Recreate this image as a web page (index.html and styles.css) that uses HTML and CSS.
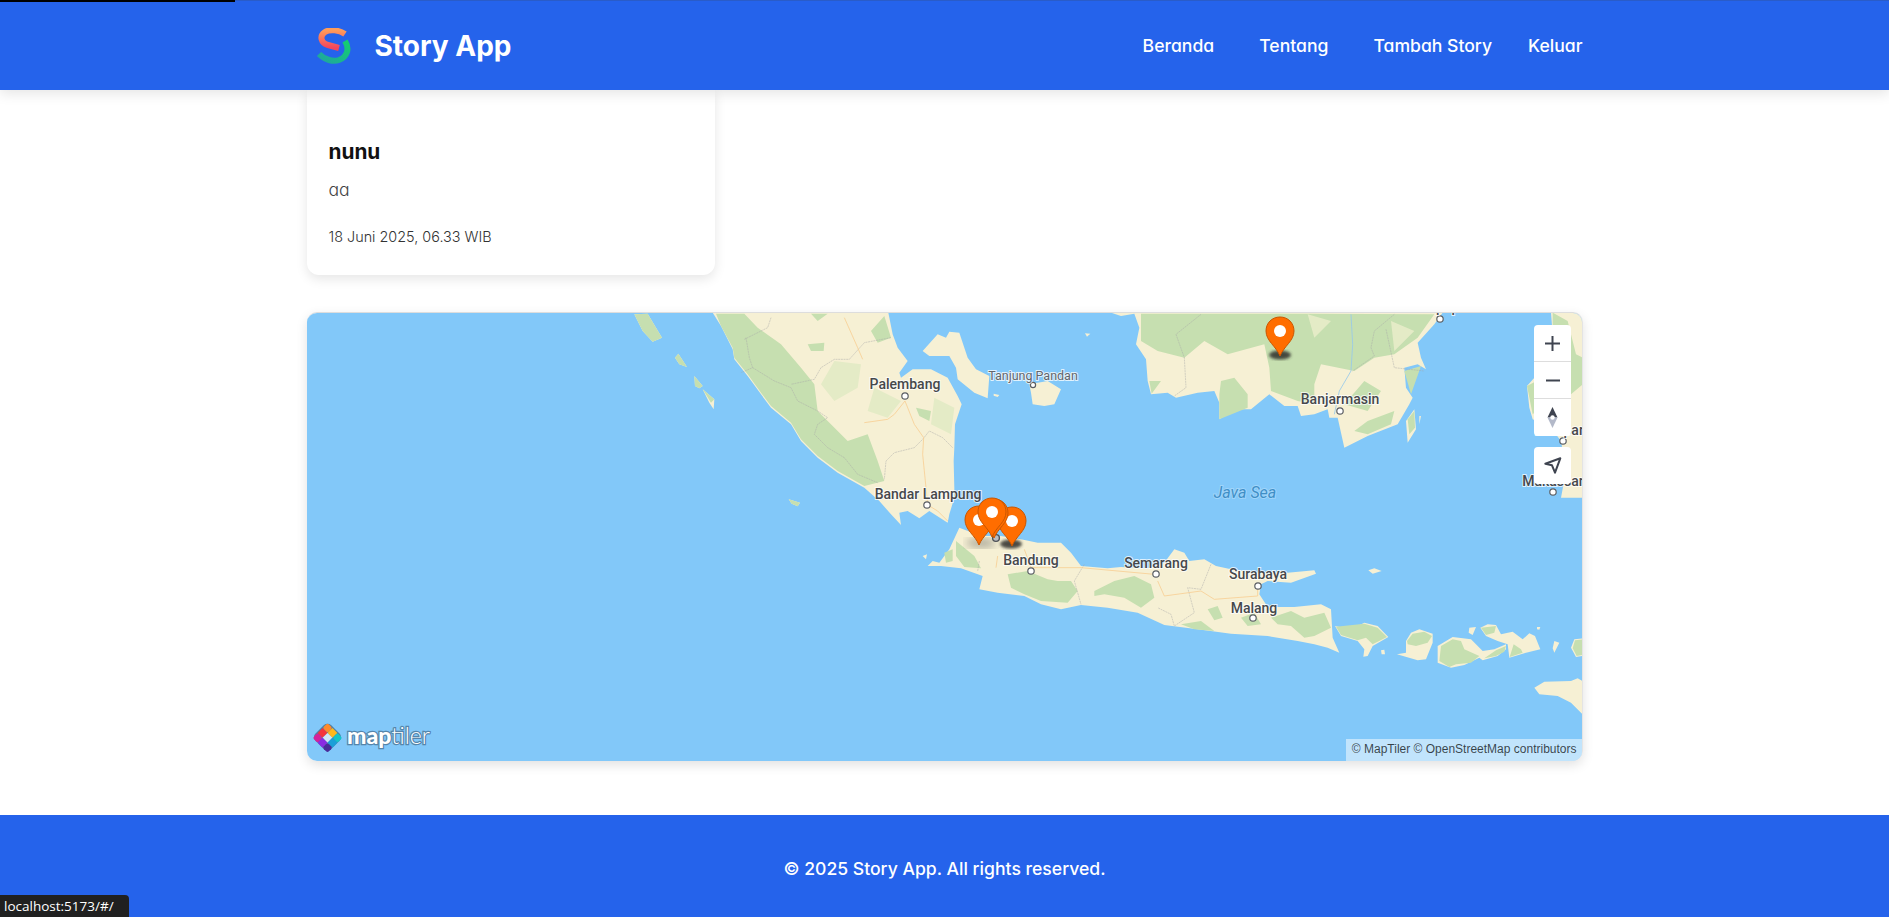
FILE: index.html
```html
<!DOCTYPE html>
<html lang="id">
<head>
    <meta charset="UTF-8">
    <meta name="viewport" content="width=device-width, initial-scale=1.0">
    <title>Story App</title>
    <link rel="stylesheet" href="styles.css">
</head>
<body>
    <div class="page-progress"></div>

    <header class="app-bar">
        <div class="app-bar-inner">
            <a class="brand" href="#/">
                <svg class="brand-logo" viewBox="15 18 36 36" width="36" height="36">
                    <defs>
                        <linearGradient id="logoTop" x1="0" y1="0" x2="0" y2="1">
                            <stop offset="0" stop-color="#ff9c5b"/>
                            <stop offset="1" stop-color="#f2455c"/>
                        </linearGradient>
                        <linearGradient id="logoBottom" x1="1" y1="0" x2="0" y2="1">
                            <stop offset="0" stop-color="#14cf6e"/>
                            <stop offset="1" stop-color="#1fa5a0"/>
                        </linearGradient>
                    </defs>
                    <path d="M44 24 C38 20 29 19 24 22 C18 26 20 33 27 35 L38 38" fill="none" stroke="url(#logoTop)" stroke-width="6"/>
                    <path d="M44 31 C49 39 46 47 38 50 C32 52 24 50 18 44" fill="none" stroke="url(#logoBottom)" stroke-width="6"/>
                </svg>
                <span class="brand-name">Story App</span>
            </a>
            <nav class="nav-links">
                <a href="#/">Beranda</a>
                <a href="#/about">Tentang</a>
                <a href="#/add">Tambah Story</a>
                <a class="nav-logout" href="#/logout">Keluar</a>
            </nav>
        </div>
    </header>

    <main class="content">
        <article class="story-card">
            <h2>nunu</h2>
            <p class="story-text">aa</p>
            <p class="story-date">18 Juni 2025, 06.33 WIB</p>
        </article>

        <section class="map-box">
            <svg class="map-canvas" viewBox="306 312 1276 448" width="1276" height="448">
                <defs>
                    <path id="pinShape" d="M15 1 C7 1 1 7 1 15 C1 25 11 30 15 40 C19 30 29 25 29 15 C29 7 23 1 15 1Z"/>
                    <g id="pin">
                        <use href="#pinShape" class="pin-body"/>
                        <circle cx="15" cy="15" r="6" fill="#fff"/>
                    </g>
                    <filter id="soft"><feGaussianBlur stdDeviation="1.6"/></filter>
                    <filter id="softer"><feGaussianBlur stdDeviation="4"/></filter>
                </defs>

                <rect x="306" y="312" width="1276" height="448" class="sea"/>

                <!-- sumatra -->
                <g transform="translate(600 300) scale(.33333)">
                    <path class="land" d="M335 35 L360 75 395 145 400 175 440 225 480 280 510 320 570 370 600 420 650 470 710 515 790 560 835 600 870 640 900 672 895 635 920 630 955 652 985 630 1040 665 1045 640 1060 590 1060 560 1058 480 1060 440 1062 370 1082 310 1070 285 1040 230 990 205 935 205 900 230 895 215 920 180 890 140 875 100 862 35Z"/>
                    <path class="green" d="M345 38 L430 38 470 80 540 130 600 200 640 250 650 330 680 360 740 420 800 400 830 480 850 540 790 555 710 510 650 465 600 415 570 365 510 315 480 275 440 220 400 170 395 140 360 75Z"/>
                    <path class="green" d="M810 90 L850 45 870 110 830 125Z M620 130 L670 125 668 150 630 150Z M630 38 L680 38 650 60Z M945 320 L990 330 985 360 955 345Z"/>
                    <path class="pale" d="M700 180 L780 190 770 260 700 300 660 250Z M1000 290 L1060 320 1050 400 990 370Z M820 260 L900 300 860 350 800 330Z"/>
                    <path class="border-line" d="M435 110 L445 170 455 200 420 215 M455 200 L520 240 570 260 590 300 650 330 680 350 650 370 640 400 680 440 730 470 770 520 830 545 M510 50 L500 80 430 115 M870 110 L790 125 745 175 700 175 660 200 640 235 570 250 M1055 440 L1025 410 985 390 965 415 940 440 880 455 855 480 850 535"/>
                    <path class="road" d="M912 300 L880 340 860 355 790 365 M912 300 L940 370 968 410 965 460 975 560 980 612 1010 630 1040 660 M730 50 L770 140 785 175"/>
                    <path class="land" d="M100 40 L140 38 165 80 183 110 155 122 125 90Z M222 170 L232 158 258 198 235 190Z M280 225 L305 255 295 262 282 255Z M305 265 L340 295 338 325 325 305Z M563 595 L597 605 590 616 572 608Z M965 150 L1010 100 1035 110 1045 92 1075 95 1100 170 1125 205 1165 225 1160 292 1120 275 1070 235 1065 200 1045 165 985 165Z M1285 250 L1340 240 1380 265 1360 310 1330 315 1295 310 1290 275Z M1178 278 L1195 282 1190 288 1178 284Z M1452 97 L1468 98 1458 107Z M965 765 L978 760 975 775Z"/>
                    <path class="green" d="M100 40 L140 38 165 80 183 110 155 122 125 90Z M222 170 L232 158 258 198 235 190Z M280 225 L305 255 295 262 282 255Z M305 265 L340 295 330 305Z M563 595 L597 605 590 616 572 608Z"/>
                </g>

                <!-- java -->
                <g transform="translate(880 480) scale(.33333)">
                    <path class="land" d="M140 255 L155 240 175 245 205 205 235 140 300 165 360 165 420 175 470 185 540 185 570 215 600 255 680 262 720 258 800 262 850 245 880 205 910 215 925 240 970 235 1005 255 1050 265 1130 275 1220 275 1300 268 1305 278 1230 305 1160 300 1140 310 1135 340 1160 378 1240 378 1320 370 1350 385 1355 470 1375 515 1340 500 1300 490 1250 480 1160 465 1050 458 950 445 850 432 770 395 680 380 600 372 540 385 480 370 430 345 350 335 295 325 305 285 240 262 180 255Z"/>
                    <path class="green" d="M380 280 L440 270 500 295 530 300 570 300 590 330 560 365 480 360 430 340 390 320Z M640 330 L700 300 760 285 810 310 820 350 780 380 730 350 670 340 640 345Z M1170 410 L1230 390 1270 410 1330 395 1350 440 1300 465 1270 470 1230 435 1190 430Z M980 385 L1010 375 1025 410 1000 418Z M900 430 L960 420 1000 450 940 445Z M1080 410 L1120 395 1140 430 1100 435Z M225 180 L280 225 300 262 250 258 225 225Z M190 215 L215 205 215 240 195 245Z"/>
                    <path class="border-line" d="M295 240 L290 270 M610 250 L580 300 600 370 M990 250 L960 325 920 320 940 395 880 435 870 400 830 380"/>
                    <path class="road" d="M345 260 L350 225 M830 300 L850 345 960 330 1000 355 1130 345 1130 315 M430 205 L450 260 600 260 820 280"/>
                </g>

                <!-- kalimantan -->
                <g transform="translate(1100 300) scale(.33333)">
                    <path class="land" d="M30 35 L60 45 100 38 115 80 105 130 135 175 140 240 150 280 200 275 225 290 290 275 340 270 355 305 355 355 380 340 420 325 450 325 505 280 550 315 590 315 600 345 640 340 680 325 685 350 710 350 730 440 800 405 890 370 925 310 935 290 915 260 910 200 950 190 975 205 960 170 950 125 1000 70 1025 35Z"/>
                    <path class="green" d="M120 38 L620 38 1000 40 950 110 880 160 820 170 760 210 660 190 640 250 640 310 590 300 510 270 505 200 490 130 380 160 310 120 250 170 170 150 120 120Z M360 240 L400 230 440 280 440 320 355 355 355 280Z M760 390 L800 360 880 330 870 370 800 400Z M145 240 L180 240 152 278Z M790 240 L840 270 800 330 730 310Z M910 210 L960 195 930 280Z"/>
                    <path class="pale" d="M620 40 L690 60 640 110Z M870 60 L940 90 880 150Z"/>
                    <path class="border-line" d="M300 40 L225 100 250 170 255 260 220 285 M880 40 L820 90 810 140 820 165 755 210 M855 85 L880 200 970 210"/>
                    <path class="river" d="M750 40 L755 130 750 210 715 270 700 340"/>
                    <path class="land" d="M915 360 L940 325 945 385 920 425Z M955 345 L960 345 955 370Z"/>
                    <path class="green" d="M920 355 L940 330 942 380 925 400Z"/>
                </g>

                <!-- sulawesi -->
                <g transform="translate(1450 300) scale(.33333)">
                    <path class="land" d="M300 35 L395 35 395 590 330 590 345 510 330 420 300 380 245 355 235 320 228 255 250 230 285 220 300 170 305 100Z"/>
                    <path class="green" d="M305 35 L350 60 375 160 395 170 395 250 360 280 330 280 290 300 245 340 228 255 285 225 305 160Z"/>
                </g>

                <!-- nusa tenggara -->
                <g transform="translate(1330 560) scale(.33333)">
                    <path class="land" d="M12 195 L60 205 100 185 140 195 172 228 125 255 110 285 97 287 100 265 80 240 30 225Z M225 240 L240 215 265 205 305 218 305 245 285 295 260 298 198 280 225 275Z M320 255 L365 228 420 235 455 270 490 265 525 250 525 265 500 285 455 298 445 290 400 312 360 320 320 305Z M448 200 L470 190 495 192 510 220 545 212 575 235 595 217 612 225 628 265 585 275 535 290 530 250 500 240 465 225Z M415 200 L435 198 425 222 413 215Z M150 268 L160 266 162 280 152 280Z M618 198 L628 198 625 206 618 205Z M670 240 L685 245 670 275 665 262Z M720 260 L730 235 755 232 755 285 735 288Z M112 28 L130 22 152 30 125 38Z M610 380 L640 362 720 360 740 352 755 360 755 460 720 425 680 405 625 400Z"/>
                    <path class="green" d="M15 197 L100 188 140 200 168 228 125 250 105 230 80 238 30 222Z M228 240 L245 218 280 212 303 225 290 245 255 255 230 250Z M325 300 L330 255 365 235 390 240 400 265 445 285 420 305 375 310 355 318Z M450 200 L495 195 490 215 465 222Z M460 292 L495 268 525 255 520 272 495 285Z M536 288 L548 250 570 265 575 275Z M725 262 L732 238 755 235 755 282 737 285Z"/>
                </g>

                <!-- place labels -->
                <g class="place-dots">
                    <circle cx="904" cy="395" r="3.2"/>
                    <circle cx="1032" cy="384" r="2.6"/>
                    <circle cx="926" cy="504" r="3.2"/>
                    <circle cx="1030" cy="570" r="3.2"/>
                    <circle cx="1155" cy="573" r="3.2"/>
                    <circle cx="1257" cy="585" r="3.2"/>
                    <circle cx="1252" cy="617" r="3.2"/>
                    <circle cx="1339" cy="410" r="3.2"/>
                    <circle cx="1439" cy="318" r="3.2"/>
                    <circle cx="1562" cy="440" r="3.2"/>
                    <circle cx="1552" cy="491" r="3.2"/>
                </g>
                <g class="place-names">
                    <text x="904" y="388">Palembang</text>
                    <text x="1032" y="379" class="place-small">Tanjung Pandan</text>
                    <text x="927" y="498">Bandar Lampung</text>
                    <text x="1030" y="564">Bandung</text>
                    <text x="1155" y="567">Semarang</text>
                    <text x="1257" y="578">Surabaya</text>
                    <text x="1253" y="612">Malang</text>
                    <text x="1339" y="403">Banjarmasin</text>
                    <text x="1439" y="311">Balikpapan</text>
                    <text x="1562" y="434">Parepare</text>
                    <text x="1552" y="485">Makassar</text>
                </g>
                <text x="1244" y="497" class="sea-name">Java Sea</text>

                <!-- marker shadows + markers -->
                <ellipse cx="1279" cy="354" rx="11" ry="4.5" class="pin-shadow" filter="url(#soft)"/>
                <ellipse cx="1010" cy="543" rx="11" ry="4.5" class="pin-shadow" filter="url(#soft)"/>
                <ellipse cx="980" cy="542" rx="15" ry="5" class="pin-shadow-faint" filter="url(#softer)"/>
                <circle cx="995" cy="537" r="3.4" class="capital-dot"/>
                <use href="#pin" x="1264" y="315"/>
                <use href="#pin" x="963" y="504"/>
                <use href="#pin" x="996" y="505"/>
                <use href="#pinShape" x="978" y="497" class="pin-body"/>
                <use href="#pin" x="976" y="496"/>

                <!-- maptiler logo -->
                <g class="logo-mark" transform="translate(326.5 722) rotate(45)">
                    <rect x="-1" y="-1" width="22" height="22" rx="5" class="logo-halo"/>
                    <rect x="0" y="0" width="7" height="7" rx="2" fill="#ff8a2b"/>
                    <rect x="7" y="0" width="7" height="7" fill="#ffb81c"/>
                    <rect x="14" y="0" width="7" height="7" rx="2" fill="#12c4c9"/>
                    <rect x="0" y="7" width="7" height="7" fill="#f4333b"/>
                    <rect x="7" y="7" width="7" height="7" fill="#cfe6f7"/>
                    <rect x="14" y="7" width="7" height="7" fill="#1b9fd8"/>
                    <rect x="0" y="14" width="7" height="7" rx="2" fill="#d5219a"/>
                    <rect x="7" y="14" width="7" height="7" fill="#8a2be2"/>
                    <rect x="14" y="14" width="7" height="7" rx="2" fill="#4b2a99"/>
                </g>
                <text x="346" y="743" class="logo-word">map<tspan class="logo-word-light">tiler</tspan></text>
            </svg>

            <div class="map-controls">
                <div class="ctrl-group">
                    <button type="button" class="ctrl-btn">
                        <svg viewBox="0 0 37 37" width="37" height="37"><path d="M18.5 11v15M11 18.500h15" class="ctrl-stroke"/></svg>
                    </button>
                    <button type="button" class="ctrl-btn">
                        <svg viewBox="0 0 37 37" width="37" height="37"><path d="M12 18.500h14" class="ctrl-stroke"/></svg>
                    </button>
                    <button type="button" class="ctrl-btn">
                        <svg viewBox="0 0 37 37" width="37" height="37">
                            <path d="M18.500 8 L23.500 18.500 H13.500Z" fill="#3f4450"/>
                            <path d="M18.500 29 L23.500 18.500 H13.500Z" fill="#b3b9c9"/>
                            <circle cx="18.500" cy="18.500" r="2.200" fill="#fff"/>
                        </svg>
                    </button>
                </div>
                <div class="ctrl-group">
                    <button type="button" class="ctrl-btn">
                        <svg viewBox="0 0 37 37" width="37" height="37"><path d="M11.300 16.700 L26.300 11.300 21 25.700 18 18.300Z" class="ctrl-stroke ctrl-join"/></svg>
                    </button>
                </div>
            </div>

            <div class="map-attrib">© MapTiler © OpenStreetMap contributors</div>
        </section>
    </main>

    <footer class="app-footer">
        <p>© 2025 Story App. All rights reserved.</p>
    </footer>

    <div class="link-status">localhost:5173/#/</div>
</body>
</html>
```

FILE: styles.css
```css
* {
    box-sizing: border-box;
    margin: 0;
    padding: 0;
}
html, body {
    height: 917px;
    overflow: hidden;
}
body {
    font-family: Inter, "Noto Sans", sans-serif;
    font-feature-settings: "cv11";
    background-color: #fff;
    color: #111;
    display: flex;
    flex-direction: column;
}
a {
    color: inherit;
    text-decoration: none;
}
.page-progress {
    position: absolute;
    top: 0;
    left: 0;
    width: 235px;
    height: 2px;
    background-color: #000;
    z-index: 10;
}
.app-bar {
    height: 90px;
    flex-shrink: 0;
    position: relative;
    z-index: 5;
    background-color: #2563eb;
    border-top: 1px solid #2a5cc8;
    box-shadow: 0 4px 12px rgba(0, 0, 0, 0.1);
    color: #fff;
}
.app-bar-inner {
    width: 1276px;
    height: 100%;
    margin: 0 auto;
    display: flex;
    align-items: center;
    justify-content: space-between;
}
.brand {
    display: flex;
    align-items: center;
    gap: 23px;
    padding-left: 9px;
}
.brand-name {
    font-size: 28px;
    font-weight: 700;
}
.nav-links {
    display: flex;
    gap: 45px;
    font-size: 17.6px;
    font-weight: 500;
}
.nav-logout {
    margin-left: -9px;
}
.content {
    flex: 1;
    width: 1276px;
    margin: 0 auto;
    display: flex;
    flex-direction: column;
    gap: 37px;
}
.story-card {
    width: 408px;
    height: 185px;
    padding: 48px 22px 0;
    background-color: #fff;
    border-radius: 0 0 12px 12px;
    box-shadow: 0 4px 12px rgba(0, 0, 0, 0.1);
}
.story-card h2 {
    font-size: 20.8px;
    font-weight: 700;
    line-height: 28px;
}
.story-text {
    margin-top: 11px;
    font-size: 17.6px;
    font-weight: 300;
    line-height: 26px;
    color: #444;
}
.story-date {
    margin-top: 24px;
    font-size: 14.4px;
    font-weight: 300;
    line-height: 20px;
    color: #333;
}
.map-box {
    position: relative;
    height: 449px;
    border-top: 1px solid #ddd;
    border-right: 1px solid #e4e4e4;
    border-radius: 10px;
    overflow: hidden;
    box-shadow: 0 4px 12px rgba(0, 0, 0, 0.12);
}
.map-canvas {
    display: block;
}
.sea {
    fill: #82c8f9;
}
.land {
    fill: #f6f0d4;
}
.green {
    fill: #c6dfb0;
}
.pale {
    fill: #e4ebc6;
}
.border-line {
    fill: none;
    stroke: #a9a9a9;
    stroke-width: 2;
    stroke-dasharray: 6 2;
    opacity: 0.7;
}
.road {
    fill: none;
    stroke: #f8cf94;
    stroke-width: 2.5;
}
.river {
    fill: none;
    stroke: #96c9ea;
    stroke-width: 2.5;
}
.place-dots circle {
    fill: #fff;
    stroke: #5b5e63;
    stroke-width: 1.2;
}
.place-names text {
    font-family: Roboto, sans-serif;
    font-size: 14px;
    font-weight: 500;
    text-anchor: middle;
    fill: #46484c;
    stroke: rgba(255, 255, 255, 0.75);
    stroke-width: 2px;
    paint-order: stroke;
}
.place-names .place-small {
    font-size: 12.5px;
    font-weight: 400;
    fill: #62656b;
}
.sea-name {
    font-family: Roboto, sans-serif;
    font-size: 16px;
    font-style: italic;
    text-anchor: middle;
    fill: #3f8fc6;
    stroke: rgba(255, 255, 255, 0.25);
    stroke-width: 2px;
    paint-order: stroke;
}
.pin-body {
    fill: #ff6d00;
    stroke: #c95600;
    stroke-width: 1;
}
.pin-shadow {
    fill: #2f2f2a;
    opacity: 0.85;
}
.pin-shadow-faint {
    fill: #6b6b66;
    opacity: 0.5;
}
.capital-dot {
    fill: #b9bcc0;
    stroke: #4f5257;
    stroke-width: 1.4;
}
.logo-halo {
    fill: #4f7fa5;
}
.logo-word {
    font-family: Lato, sans-serif;
    font-size: 23px;
    font-weight: 900;
    fill: #fff;
    stroke: #5585aa;
    stroke-width: 2.5px;
    paint-order: stroke;
}
.logo-word-light {
    font-weight: 300;
}
.map-controls {
    position: absolute;
    top: 12px;
    right: 11px;
    display: flex;
    flex-direction: column;
    gap: 11px;
}
.ctrl-group {
    display: flex;
    flex-direction: column;
    background-color: #fff;
    border-radius: 4px;
    overflow: hidden;
}
.ctrl-btn {
    display: block;
    width: 37px;
    height: 37px;
    border: none;
    background: none;
}
.ctrl-btn + .ctrl-btn {
    box-shadow: 0 -1px 0 #ddd;
}
.ctrl-btn svg {
    display: block;
}
.ctrl-stroke {
    fill: none;
    stroke: #3f4450;
    stroke-width: 2;
}
.ctrl-join {
    stroke-linejoin: round;
}
.map-attrib {
    position: absolute;
    right: 0;
    bottom: 0;
    height: 22px;
    padding: 0 5px 0 6px;
    font-family: "Liberation Sans", Arial, sans-serif;
    font-feature-settings: normal;
    font-size: 12px;
    line-height: 21px;
    color: rgba(0, 0, 0, 0.72);
    background-color: rgba(255, 255, 255, 0.5);
}
.app-footer {
    height: 102px;
    flex-shrink: 0;
    background-color: #2563eb;
    color: #fff;
    display: flex;
    align-items: center;
    justify-content: center;
    padding-top: 4px;
    font-size: 17.6px;
    font-weight: 500;
}
.link-status {
    position: absolute;
    left: 0;
    bottom: 0;
    width: 129px;
    height: 22px;
    padding-left: 4px;
    background-color: #202020;
    border-top-right-radius: 4px;
    color: #fff;
    font-family: "Open Sans", sans-serif;
    font-feature-settings: normal;
    font-size: 13.5px;
    line-height: 22px;
    z-index: 10;
}
```
